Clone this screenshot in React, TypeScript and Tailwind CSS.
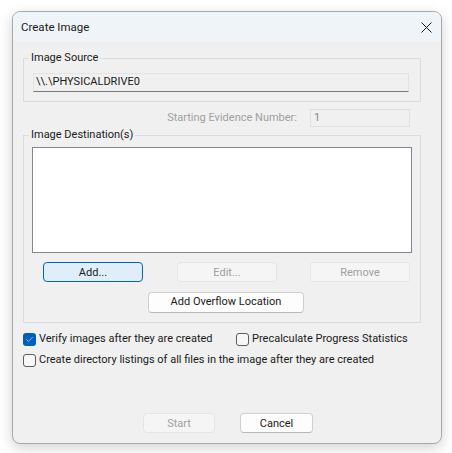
import { Check } from 'lucide-react'

const font = { fontFamily: 'Roboto, "Noto Sans", sans-serif' }

function Btn({ label, w, disabled, focused }: { label: string; w: string; disabled?: boolean; focused?: boolean }) {
  let cls = 'bg-[#fdfdfd] border-[#d0d0d0] border-b-[#b8b8b8] text-[#1a1a1a]'
  if (disabled) cls = 'bg-[#f5f5f5] border-[#e5e5e5] text-[#a0a0a0]'
  if (focused) cls = 'bg-[#e0eef9] border-[#0067c0] text-[#1a1a1a]'
  return (
    <div className={`${w} h-[20px] flex items-center justify-center rounded-[4px] border leading-none ${cls}`}>
      {label}
    </div>
  )
}

function Box({ checked }: { checked?: boolean }) {
  if (checked) {
    return (
      <div className="w-[13px] h-[13px] rounded-[3px] bg-[#005fb8] flex items-center justify-center shrink-0">
        <Check className="w-[9px] h-[9px] text-white" strokeWidth={1.5} />
      </div>
    )
  }
  return <div className="w-[13px] h-[13px] rounded-[3px] border border-[#5c5c5c] bg-[#f7f7f7] shrink-0" />
}

export default function App() {
  return (
    <div className="w-[452px] h-[453px] bg-white pt-[11px] pl-[12px] text-[11px]" style={font}>
      <div className="w-[430px] h-[433px] rounded-[8px] border border-[#a8a8a8] bg-[#f0f0f0] shadow-[0_4px_14px_rgba(0,0,0,0.18)] overflow-hidden flex flex-col text-[#1a1a1a]">
        {/* title bar */}
        <div className="h-[29px] bg-[#eff4f9] flex items-center justify-between pl-[8px] pr-[9px] shrink-0">
          <span className="text-[11.5px] pt-[2px]">Create Image</span>
          <svg width="11" height="11" viewBox="0 0 11 11" className="mt-[1px]">
            <path d="M0.5 0.5L10.5 10.5M10.5 0.5L0.5 10.5" stroke="#1a1a1a" strokeWidth="1" />
          </svg>
        </div>

        <div className="flex flex-col flex-1 pl-[10px]">
          {/* source */}
          <fieldset className="w-[398px] mt-[9px] border border-[#dcdcdc] pb-[9px]">
            <legend className="ml-[5px] px-[2px] leading-[16px]">Image Source</legend>
            <div className="ml-[9px] w-[376px] h-[19px] mt-[7px] bg-[#f0f0f0] border border-[#e3e3e3] border-b-[#7a7a7a] flex items-center pl-[2px] text-[#1a1a1a]">
              \\.\PHYSICALDRIVE0
            </div>
          </fieldset>

          <div className="flex items-center mt-[7px] h-[18px]">
            <span className="w-[274px] text-right text-[#a0a0a0]">Starting Evidence Number:</span>
            <div className="ml-[13px] w-[100px] h-[18px] border border-[#e0e0e0] flex items-center pl-[3px] text-[#8a8a8a]">1</div>
          </div>

          {/* destinations */}
          <fieldset className="w-[398px] border border-[#dcdcdc] pb-[9px]">
            <legend className="ml-[5px] px-[2px] leading-[16px]">Image Destination(s)</legend>
            <div className="ml-[8px] w-[380px] h-[106px] mt-[4px] bg-white border border-[#828790]" />
            <div className="flex mt-[9px] ml-[19px]">
              <Btn label="Add..." w="w-[100px]" focused />
              <div className="ml-[34px]">
                <Btn label="Edit..." w="w-[100px]" disabled />
              </div>
              <div className="ml-[33px]">
                <Btn label="Remove" w="w-[100px]" disabled />
              </div>
            </div>
            <div className="mt-[10px] ml-[124px]">
              <div className="w-[156px] h-[21px] flex items-center justify-center rounded-[4px] border border-[#d0d0d0] border-b-[#b8b8b8] bg-[#fdfdfd]">
                Add Overflow Location
              </div>
            </div>
          </fieldset>

          {/* options */}
          <div className="flex items-center mt-[8px] h-[16px]">
            <Box checked />
            <span className="ml-[3px] w-[197px]">Verify images after they are created</span>
            <Box />
            <span className="ml-[3px]">Precalculate Progress Statistics</span>
          </div>
          <div className="flex items-center mt-[5px] h-[16px]">
            <Box />
            <span className="ml-[3px]">Create directory listings of all files in the image after they are created</span>
          </div>

          <div className="flex mt-auto mb-[10px] ml-[120px]">
            <Btn label="Start" w="w-[72px]" disabled />
            <div className="ml-[25px]">
              <Btn label="Cancel" w="w-[73px]" />
            </div>
          </div>
        </div>
      </div>
    </div>
  )
}
